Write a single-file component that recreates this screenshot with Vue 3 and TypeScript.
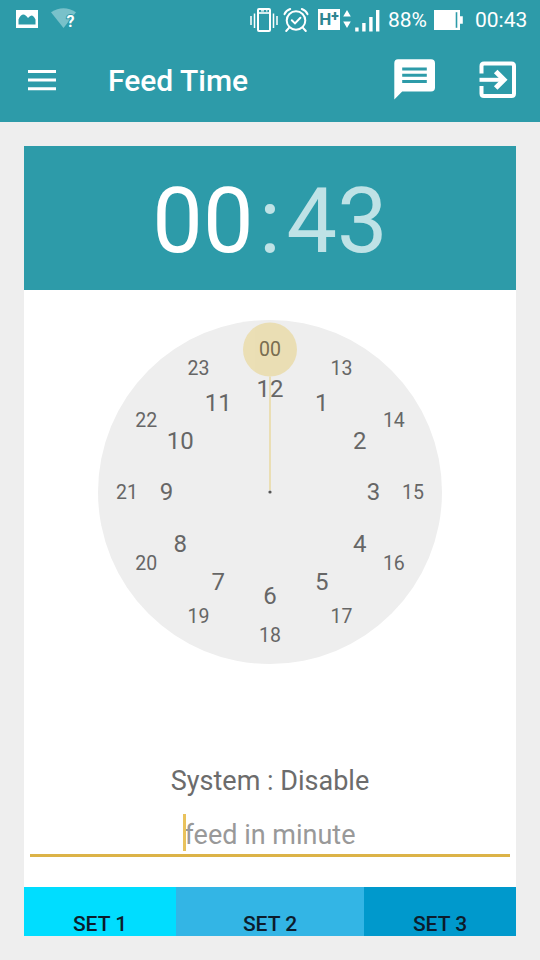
<script setup lang="ts">
import { ref } from 'vue'

interface Mark {
  label: string
  x: number
  y: number
  inner: boolean
}

const CENTER = 172
const hour = ref('00')
const minute = ref('43')
const systemState = ref('Disable')

function ring(labels: string[], radius: number, inner: boolean): Mark[] {
  return labels.map((label, i) => {
    const a = (i * Math.PI) / 6
    return {
      label,
      inner,
      x: CENTER + radius * Math.sin(a),
      y: CENTER - radius * Math.cos(a) + (inner ? 8.3 : 6.9),
    }
  })
}

const innerMarks = ring(['12', '1', '2', '3', '4', '5', '6', '7', '8', '9', '10', '11'], 103.5, true)
const outerMarks = ring(['00', '13', '14', '15', '16', '17', '18', '19', '20', '21', '22', '23'], 143, false)
const marks: Mark[] = [...innerMarks, ...outerMarks]
</script>

<template>
  <div class="screen">
    <header class="top">
      <div class="status">
        <svg class="picture" width="22" height="18" viewBox="0 0 22 18">
          <path fill="#fff" fill-rule="evenodd" d="M0 0H22V18H0ZM2.5 14.5H19.5V9.5Q17.5 5.5 15.5 5.5Q14 5.5 12 8Q9.5 4.5 7.5 4.5Q4.5 4.5 2.5 9.5Z" />
        </svg>
        <svg class="wifi" width="26" height="22" viewBox="0 0 26 22">
          <path fill="#79c1ca" d="M0 4.2Q12.5-3.8 25 4.2L12.5 20Z" />
          <text x="19.6" y="19.3">?</text>
        </svg>
        <svg class="vibrate" width="28" height="26" viewBox="0 0 28 26">
          <path fill="none" stroke="#fff" stroke-width="1.5" d="M1 9V18M4.5 6.5V21M23.5 6.5V21M27 9V18" />
          <rect x="8" y="2" width="12" height="22" rx="1" fill="none" stroke="#fff" stroke-width="2" />
          <path fill="none" stroke="#fff" stroke-width="1.6" d="M8 6H20" />
          <path fill="none" stroke="#fff" stroke-width="1.2" d="M11 3.8H14M16 3.8H17.5" />
        </svg>
        <svg class="alarm" width="26" height="26" viewBox="0 0 26 26">
          <g fill="none" stroke="#fff" stroke-width="2" stroke-linecap="round">
            <circle cx="13" cy="13.5" r="9.3" />
            <path d="M1.5 7.2Q3 3.4 7.2 2M24.5 7.2Q23 3.4 18.8 2M6 20.8L3.2 24M20 20.8L22.8 24M8.8 13.2L12 16.4L17.4 10.8" />
          </g>
        </svg>
        <span class="hplus">H<b>+</b></span>
        <svg class="arrows" width="8" height="20" viewBox="0 0 8 20">
          <path fill="#fff" d="M4 1L7.8 7.5H.2ZM4 19L.2 12.5H7.8Z" />
        </svg>
        <svg class="signal" width="25" height="22" viewBox="0 0 25 22">
          <path fill="#fff" d="M.2 17.5H3.6V21.5H.2ZM7.2 13H10.6V21.5H7.2ZM14.2 7H17.6V21.5H14.2ZM21 0H24.4V21.5H21Z" />
        </svg>
        <span class="percent">88%</span>
        <svg class="battery" width="29" height="20" viewBox="0 0 29 20">
          <path fill="#fff" d="M0 0H26V6.2H28.8V13.8H26V20H0Z" />
          <path fill="#2d9ba9" d="M21.7 2.2H23.3V17.8H21.7Z" />
        </svg>
        <span class="clock">00:43</span>
      </div>
      <nav class="toolbar">
        <svg class="menu" width="28" height="21" viewBox="0 0 28 21">
          <path fill="#fff" d="M0 0H28V3H0ZM0 8.6H28V11.6H0ZM0 17.2H28V20.2H0Z" />
        </svg>
        <h1>Feed Time</h1>
        <svg class="chat" width="41" height="41" viewBox="0 0 41 41">
          <path fill="#fff" d="M4 .3H37Q41 .3 41 4.3V28.5Q41 32.5 37 32.5H8.2L.3 40.5V4.3Q.3 .3 4 .3Z" />
          <path fill="none" stroke="#2d9ba9" stroke-width="3" d="M8.2 10H32.8M8.2 16.3H32.8M8.2 22.5H32.8" />
        </svg>
        <svg class="exit" width="38" height="38" viewBox="0 0 38 38">
          <g fill="none" stroke="#fff" stroke-width="4">
            <path d="M2.5 12.5V5Q2.5 2.5 5 2.5H32.5Q35 2.5 35 5V32.5Q35 35 32.5 35H5Q2.5 35 2.5 32.5V25" />
            <path d="M.5 18.8H24" />
            <path d="M16.7 10.5L25 18.8L16.7 27.1" stroke-width="5" />
          </g>
        </svg>
      </nav>
    </header>

    <main class="card">
      <div class="time">
        <span class="hours">{{ hour }}</span><span class="colon">:</span><span class="minutes">{{ minute }}</span>
      </div>

      <svg class="dial" width="344" height="344" viewBox="0 0 344 344">
        <circle cx="172" cy="172" r="172" fill="#eee" />
        <g class="hand">
          <circle cx="172" cy="29.5" r="27" />
          <path d="M171 56.5H173V170H171Z" />
        </g>
        <text v-for="m in marks" :key="m.label" :x="m.x" :y="m.y" :class="[m.inner ? 'inner' : 'outer', { selected: m.label === hour }]">{{ m.label }}</text>
        <circle cx="172" cy="172" r="1.6" fill="#555" />
      </svg>

      <p class="system">System : {{ systemState }}</p>

      <div class="field">
        <span class="hint">feed in minute<i class="caret"></i></span>
      </div>

      <div class="buttons">
        <button class="set one">SET 1</button>
        <button class="set two">SET 2</button>
        <button class="set three">SET 3</button>
      </div>
    </main>
  </div>
</template>

<style>
body {
  background: #eee;
}
</style>

<style scoped>
.screen {
  display: flex;
  flex-direction: column;
  width: 540px;
  height: 960px;
  overflow: hidden;
  background: #eee;
  font-family: Roboto, "Liberation Sans", sans-serif;
}
.top {
  height: 122px;
  flex: none;
  background: #2d9ba9;
  color: #fff;
}
.status {
  display: flex;
  align-items: center;
  height: 40px;
  padding: 0 12px 0 16px;
}
.status svg {
  flex: none;
}
.picture {
  margin-top: -3px;
}
.wifi {
  margin-left: 13px;
  margin-top: -2px;
}
.wifi text {
  fill: #fff;
  stroke: #2d9ba9;
  stroke-width: 2px;
  paint-order: stroke;
  text-anchor: middle;
  font-size: 16px;
  font-weight: 700;
}
.vibrate {
  margin-left: auto;
}
.alarm {
  margin-left: 5px;
}
.hplus {
  display: flex;
  align-items: center;
  justify-content: center;
  width: 22px;
  height: 21px;
  margin: -2px 0 0 9px;
  background: #fff;
  color: #2d8592;
  font-size: 17px;
  font-weight: 700;
}
.hplus b {
  margin-top: -6px;
  font-size: 14px;
}
.arrows {
  margin: -2px 0 0 3px;
}
.signal {
  margin-left: 4px;
  margin-top: 1px;
}
.percent {
  width: 39px;
  margin-left: 8px;
  font-size: 21px;
}
.battery {
  margin-left: 7px;
  margin-top: -1px;
}
.clock {
  width: 53px;
  margin-left: 12px;
  font-size: 21px;
}
.toolbar {
  display: flex;
  align-items: center;
  height: 82px;
  padding: 0 23px 0 28px;
}
.menu {
  margin-top: -2px;
}
h1 {
  margin: 0 0 0 52px;
  font-size: 30px;
  font-weight: 500;
  line-height: 40px;
}
.chat {
  margin-left: auto;
  margin-top: -3px;
}
.exit {
  margin-left: 44px;
  margin-top: -3px;
}
.card {
  display: flex;
  flex-direction: column;
  align-items: center;
  width: 492px;
  height: 790px;
  margin: 24px;
  overflow: hidden;
  background: #fff;
}
.time {
  display: flex;
  flex: none;
  align-items: center;
  justify-content: center;
  box-sizing: border-box;
  width: 100%;
  height: 144px;
  padding-top: 8px;
  background: #2d9ba9;
  color: #bfe2e6;
  font-size: 90px;
  line-height: 136px;
}
.hours {
  color: #fff;
}
.colon {
  width: 33px;
  text-align: center;
}
.dial {
  flex: none;
  margin-top: 30px;
}
.dial text {
  fill: #666;
  text-anchor: middle;
}
.dial .inner {
  font-size: 24px;
}
.dial .outer {
  font-size: 19.5px;
}
.dial .selected {
  fill: #796d50;
}
.hand {
  fill: #e6c860;
  opacity: 0.4;
}
.system {
  margin: 100px 0 0;
  color: #6c6c6c;
  font-size: 27px;
  line-height: 34px;
}
.field {
  display: flex;
  justify-content: center;
  width: 480px;
  height: 40px;
  margin-top: 16px;
  border-bottom: 3px solid #dcb347;
}
.hint {
  position: relative;
  color: #999;
  font-size: 27px;
  line-height: 42px;
}
.caret {
  position: absolute;
  left: -2px;
  top: 0;
  width: 3px;
  height: 37px;
  background: #e9c25c;
}
.buttons {
  display: grid;
  grid-template-columns: 152px 188px 152px;
  width: 100%;
  height: 49px;
  margin-top: auto;
}
.set {
  height: 74px;
  padding: 0;
  border: 0;
  color: #0c1c2c;
  font: 500 21px/74px Roboto, "Liberation Sans", sans-serif;
}
.one {
  background: #00ddff;
}
.two {
  background: #33b5e5;
}
.three {
  background: #0099cc;
}
</style>
